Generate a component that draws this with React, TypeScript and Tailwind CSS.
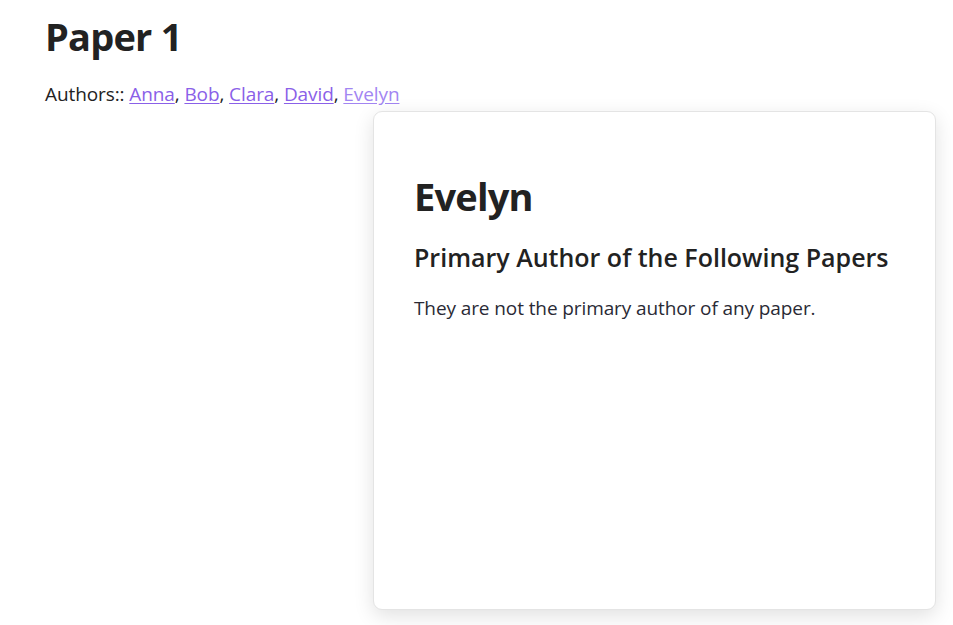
import React from 'react';

const authors = ['Anna', 'Bob', 'Clara', 'David', 'Evelyn'];

const App: React.FC = () => {
  return (
    <div className="relative min-h-[625px] bg-white px-[45px] pt-[10px] text-[#222] font-['Open_Sans',sans-serif]">
      <h1 className="text-[38px] font-bold leading-[52px] tracking-[-0.8px]">Paper 1</h1>
      <p className="mt-[19px] text-[19px] leading-[26px] tracking-[-0.1px]">
        Authors::{' '}
        {authors.map((name, i) => (
          <React.Fragment key={name}>
            <a
              href="#"
              className={
                name === 'Evelyn'
                  ? 'text-[#a285f2] underline underline-offset-2'
                  : 'text-[#8a60e8] underline underline-offset-2'
              }
            >
              {name}
            </a>
            {i < authors.length - 1 ? ', ' : ''}
          </React.Fragment>
        ))}
      </p>

      {/* popover card for the hovered author */}
      <div className="absolute left-[373px] top-[111px] h-[499px] w-[563px] rounded-[9px] border border-[#e4e4e4] bg-white px-[40px] pt-[56px] shadow-[0_6px_20px_rgba(0,0,0,0.12)]">
        <h2 className="text-[38px] font-bold leading-[56px] tracking-[-0.8px]">Evelyn</h2>
        <h3 className="mt-[16px] text-[25px] font-semibold leading-[34px]">Primary Author of the Following Papers</h3>
        <p className="mt-[21px] text-[19px] leading-[26px] tracking-[-0.1px] text-[#2a2a35]">They are not the primary author of any paper.</p>
      </div>
    </div>
  );
};

export default App;
